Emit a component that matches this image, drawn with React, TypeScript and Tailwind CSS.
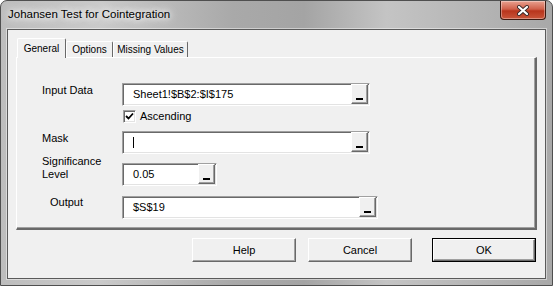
import React from 'react';

const sunken =
  'border border-t-[#a0a0a0] border-l-[#a0a0a0] border-r-white border-b-white shadow-[inset_1px_1px_0_#696969,inset_-1px_-1px_0_#e3e3e3]';
const raised =
  'border border-t-white border-l-white border-r-[#696969] border-b-[#696969] shadow-[inset_-1px_-1px_0_#a0a0a0]';

function BrowseButton() {
  return (
    <div className={`flex h-[20px] w-[17px] shrink-0 items-end justify-center bg-[#f0f0f0] pb-[3px] ${raised}`}>
      <div className="h-[2px] w-[7px] bg-black" />
    </div>
  );
}

function RefField({ className, value, caret }: { className: string; value?: string; caret?: boolean }) {
  return (
    <div className={`flex h-[23px] bg-white ${sunken} ${className}`}>
      <div className="flex min-w-0 flex-1 items-center pl-[10px]">
        {caret ? <span className="h-[11px] w-px bg-black" /> : <span>{value}</span>}
      </div>
      <div className="pr-[1px]">
        <BrowseButton />
      </div>
    </div>
  );
}

function Tab({ label, selected, className }: { label: string; selected?: boolean; className: string }) {
  return (
    <div
      className={`flex items-center justify-center rounded-t-[2px] border-l border-t border-r border-l-white border-t-white border-r-[#696969] bg-[#f0f0f0] text-[10px] ${
        selected ? 'relative z-10 -mb-px h-[20px]' : 'h-[16px]'
      } ${className}`}
    >
      {label}
    </div>
  );
}

function DialogButton({ label, isDefault }: { label: string; isDefault?: boolean }) {
  if (isDefault) {
    return (
      <div className="ml-[20px] h-[24px] w-[104px] border border-black">
        <div className={`flex h-full w-full items-center justify-center bg-[#f0f0f0] ${raised}`}>{label}</div>
      </div>
    );
  }
  return (
    <div className={`flex h-[24px] w-[104px] items-center justify-center bg-[#f0f0f0] ${raised}`}>{label}</div>
  );
}

export default function App() {
  return (
    <div className="relative h-[286px] w-[553px] overflow-hidden rounded-t-[7px] border border-[#4f4f4f] bg-[linear-gradient(90deg,#bdbdbd_0%,#cacaca_18%,#a9a9a9_42%,#a4a4a4_55%,#c4c4c4_70%,#b6b6b6_85%,#a8a8a8_100%)] font-['Liberation_Sans',Arial,sans-serif] text-[11px] text-black">
      <div className="flex h-[28px] items-center pl-[7px] text-[11.5px] [text-shadow:0_0_6px_#fff,0_0_10px_#fff,0_0_14px_#fff]">
        Johansen Test for Cointegration
      </div>

      <div className="absolute right-[6px] top-0 flex h-[19px] w-[46px] items-center justify-center rounded-b-[4px] border border-t-0 border-[#3d1a12] bg-[linear-gradient(180deg,#e9a190_0%,#d0604a_45%,#b8351d_55%,#c9553a_100%)] shadow-[inset_0_0_0_1px_rgba(255,255,255,0.35)]">
        <svg width="14" height="11" viewBox="0 0 14 11">
          <path d="M3 2 L11 9 M11 2 L3 9" stroke="#3a2a2a" strokeWidth="4" strokeLinecap="round" />
          <path d="M3 2 L11 9 M11 2 L3 9" stroke="#ffffff" strokeWidth="2.2" strokeLinecap="round" />
        </svg>
      </div>

      <div className="mx-[6px] flex h-[250px] flex-col border border-[#5a5a5a] bg-[#f0f0f0] px-[8px] pt-[8px] shadow-[0_0_0_1px_rgba(255,255,255,0.45)]">
        <div className="flex h-[19px] items-end pl-px">
          <Tab label="General" selected className="w-[49px]" />
          <Tab label="Options" className="w-[47px]" />
          <Tab label="Missing Values" className="w-[75px]" />
        </div>

        <div className="flex h-[173px] flex-col border-2 border-l border-t border-l-white border-t-white border-r-[#696969] border-b-[#696969] pl-[25px] pt-[25px] shadow-[inset_-1px_-1px_0_#a0a0a0]">
          <div className="flex">
            <div className="w-[80px] pt-px leading-[13px]">Input Data</div>
            <RefField className="w-[248px]" value="Sheet1!$B$2:$I$175" />
          </div>

          <div className="ml-[81px] mt-[4px] flex h-[13px] items-center">
            <div className={`flex h-[13px] w-[13px] items-center justify-center bg-white ${sunken}`}>
              <svg width="9" height="9" viewBox="0 0 9 9">
                <path d="M1 4 L3.5 6.5 L8 1.5" stroke="#000" strokeWidth="1.8" fill="none" />
              </svg>
            </div>
            <span className="ml-[4px]">Ascending</span>
          </div>

          <div className="mt-[8px] flex">
            <div className="w-[80px] pt-px leading-[13px]">Mask</div>
            <RefField className="w-[248px]" caret />
          </div>

          <div className="mt-px flex">
            <div className="w-[80px] leading-[13px]">
              Significance
              <br />
              Level
            </div>
            <RefField className="mt-[8px] w-[95px]" value="0.05" />
          </div>

          <div className="mt-[10px] flex">
            <div className="w-[80px] pl-[8px] leading-[13px]">Output</div>
            <RefField className="w-[256px]" value="$S$19" />
          </div>
        </div>

        <div className="mr-px mt-[8px] flex justify-end">
          <DialogButton label="Help" />
          <div className="ml-[12px]">
            <DialogButton label="Cancel" />
          </div>
          <DialogButton label="OK" isDefault />
        </div>
      </div>
    </div>
  );
}
